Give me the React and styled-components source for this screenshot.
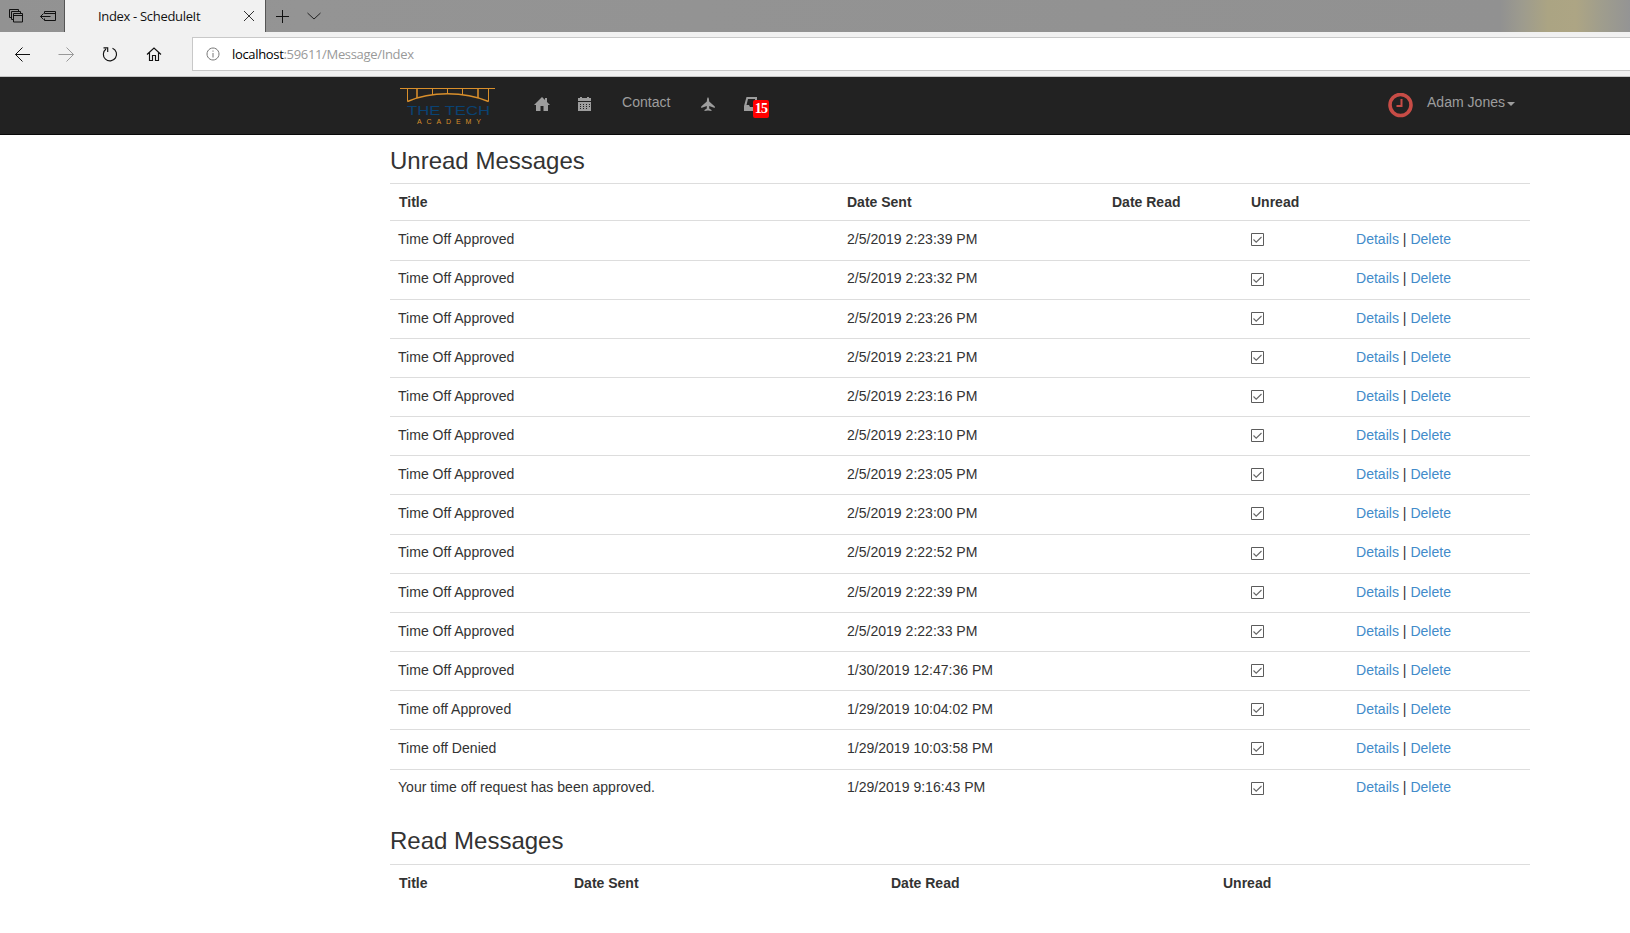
import React from 'react';
import styled, { createGlobalStyle } from 'styled-components';

const Global = createGlobalStyle`
  * { box-sizing: border-box; }
  body { margin: 0; background: #fff; color: #333; overflow: hidden;
    font: 14.06px/20px "Liberation Sans", Arial, sans-serif; }
`;
const Page = styled.div`height: 933px; overflow: hidden;`;
const TabStrip = styled.div`
  display: flex; height: 32px;
  background: linear-gradient(90deg, #929292 0, #949494 300px, #919191 1500px, #9d9b8e 1522px, #aba483 1548px, #ada584 1576px, #9f9d8d 1602px, #949494 1630px);
`;
const TabActions = styled.div`
  width: 65px; display: flex; align-items: center; padding-left: 8px; gap: 16px; border-right: 1px solid #555;
`;
const Tab = styled.div`
  width: 201px; display: flex; align-items: center; justify-content: space-between; padding: 0 10px 0 33px;
  background: #f1f1f1; border-right: 1px solid #555; color: #111;
  font: 13px "Open Sans", "Noto Sans", sans-serif; white-space: nowrap;
`;
const TabTitle = styled.span`letter-spacing: ${p => p.$ls || '-0.25px'};`;
const NewTab = styled.div`display: flex; align-items: center; padding-left: 9px; gap: 18px;`;
const AddressBar = styled.div`
  height: 45px; background: #f1f1f1; border-bottom: 1px solid #c5c5c5;
  display: flex; padding-top: 5px;
`;
const NavButtons = styled.div`width: 192px; height: 34px; display: flex; align-items: center; padding-left: 14px; gap: 28px;`;
const UrlField = styled.div`
  flex: 1; height: 34px; background: #fff; border: 1px solid #c8c8c8; border-right: 0;
  display: flex; align-items: center; padding-left: 13px; gap: 12px; color: #999;
  font: 13px "Open Sans", "Noto Sans", sans-serif; b { font-weight: 400; color: #000; }
`;
const Navbar = styled.nav`
  height: 58px; background: #222; border-bottom: 1px solid #080808; display: flex; padding-left: 400px; color: #9d9d9d;
`;
const Brand = styled.div`width: 134px; padding-top: 10px; svg { display: block; }`;
const NavItem = styled.div`width: ${p => p.$w}px; padding-top: ${p => p.$top || 0}px; svg { display: block; }`;
const Inbox = styled(NavItem)`position: relative;`;
const Badge = styled.span`
  position: absolute; left: 9px; top: 23px; width: 16px; height: 18px; border-radius: 2px; background: #f00; color: #fff;
  font: bold 14px/18px "Liberation Serif", serif; letter-spacing: -0.7px; text-align: center;
`;
const User = styled.div`margin-left: auto; width: 242px; display: flex;`;
const UserName = styled.div`padding: 15px 0 0 14px; display: flex; height: 35px; align-items: center;`;
const Caret = styled.span`border: 4px solid transparent; border-top-color: #9d9d9d; border-bottom: 0; margin: 3px 0 0 2px;`;
const Section = styled.section`width: 1140px; margin-left: 390px; padding-top: ${p => p.$top}px;`;
const Heading = styled.h2`margin: 0; height: ${p => p.$h}px; font-size: 24px; line-height: 28px; font-weight: 400;`;
const Row = styled.div`
  display: grid; grid-template-columns: ${p => p.$cols}; height: 39.16px;
  border-top: 1px solid #ddd; padding-top: 7.85px;
`;
const HeadRow = styled(Row)`height: 37.4px; padding-top: 8px; font-weight: 700; font-size: 14px;`;
const Cell = styled.div`padding-left: 8px; white-space: nowrap;`;
const HeadCell = styled.div`padding-left: 8px; white-space: nowrap; &:first-child { padding-left: 9px; }`;
const Check = styled.div`padding: 4.15px 0 0 8px; svg { display: block; }`;
const Link = styled.a`color: #428bca;`;

const unreadCols = '449px 265px 139px 105px 1fr';
const readCols = '176px 317px 332px 1fr';

const approved = ['2/5/2019 2:23:39 PM', '2/5/2019 2:23:32 PM', '2/5/2019 2:23:26 PM', '2/5/2019 2:23:21 PM',
  '2/5/2019 2:23:16 PM', '2/5/2019 2:23:10 PM', '2/5/2019 2:23:05 PM', '2/5/2019 2:23:00 PM', '2/5/2019 2:22:52 PM',
  '2/5/2019 2:22:39 PM', '2/5/2019 2:22:33 PM', '1/30/2019 12:47:36 PM'];
const messages = [
  ...approved.map(d => ['Time Off Approved', d]),
  ['Time off Approved', '1/29/2019 10:04:02 PM'],
  ['Time off Denied', '1/29/2019 10:03:58 PM'],
  ['Your time off request has been approved.', '1/29/2019 9:16:43 PM'],
];

const Line = ({ w = 16, h = 16, d, color = '#111', sw = 1 }) => (
  <svg width={w} height={h} viewBox={`0 0 ${w} ${h}`} fill="none" stroke={color} strokeWidth={sw}><path d={d} /></svg>
);
const Solid = ({ d, w = 16, h = 16 }) => (
  <svg width={w} height={h} viewBox={`0 0 ${w} ${h}`} fill="#9d9d9d"><path fillRule="evenodd" d={d} /></svg>
);
const Checkbox = () => (
  <svg width="13" height="13" fill="none">
    <path d="M.5.5h12v12H.5z" stroke="#5c5c5c" />
    <path d="M2.500 6.500l2.700 2.700 5.300-5.200" stroke="#666" strokeWidth="1.1" />
  </svg>
);
const Clock = () => (
  <svg width="25" height="25" fill="none" stroke="#c74c46">
    <circle cx="12.500" cy="12" r="10.500" strokeWidth="3.600" />
    <path d="M13.500 6v7h-5" strokeWidth="2" />
  </svg>
);

const Logo = () => (
  <svg width="96" height="40" viewBox="0 0 96 40" fill="none">
    <path d="M0 1.5H95M7.5 2V14.5M88.5 2V14.5M32.5 2V8M47.5 2V6.5M62.5 2V8" stroke="#d98f2b" />
    <path d="M17 2V11M78 2V11" stroke="#c07f2a" strokeWidth="1.8" />
    <path d="M7.5 14.5Q25 6.800 47.5 6.800T88.5 14.5" stroke="#d98f2b" strokeWidth="1.5" />
    <text x="7" y="28" fill="#0a4272" fontFamily="Liberation Sans" fontSize="12" textLength="83" lengthAdjust="spacingAndGlyphs">THE TECH</text>
    <text x="17" y="37" fill="#d98f2b" fontFamily="Liberation Sans" fontSize="7" textLength="64">ACADEMY</text>
  </svg>
);

export default function App() {
  return (
    <Page>
      <Global />
      <TabStrip>
        <TabActions>
          <Line d="M5.500 5.500h9v8.500h-9zM5.500 7.500h9M5 11.500H3.500v-8h9v2M3 9.500H1.500v-8h9v2" />
          <Line w={17} d="M4.500 5.500v-2h11v9h-11v-2M4.500 5.500h11M.5 8.500h10M3.500 5.500l-3 3 3 3" />
        </TabActions>
        <Tab>
          <TabTitle $ls="-0.32px">Index - ScheduleIt</TabTitle>
          <Line w={12} h={12} d="M1 1l10 10M11 1L1 11" color="#333" />
        </Tab>
        <NewTab>
          <Line w={14} h={14} d="M7.5 1v13M1 7.5h13" />
          <Line w={14} h={14} d="M.5 4l6.500 6 6.500-6" color="#222" />
        </NewTab>
      </TabStrip>
      <AddressBar>
        <NavButtons>
          <Line d="M1.500 8.500H16M8.500 1.500l-7 7 7 7" />
          <Line d="M0.500 8.500h15M8.500 1.500l7 7-7 7" color="#999" />
          <Line d="M10.500 2.200A6.600 6.600 0 1 1 4 3M1.500 1.800h4.200v4.200" sw={1.15} />
          <Line d="M1 8.500l7-6.500 7 6.500M3.500 6.500v8h3v-5h3v5h3v-8" sw={1.15} />
        </NavButtons>
        <UrlField>
          <Line w={14} h={14} d="M7 1a6 6 0 1 0 .01 0M7 6v4.500M7 3.500v1.200" color="#777" />
          <TabTitle $ls="-0.33px"><b>localhost</b>:59611/Message/Index</TabTitle>
        </UrlField>
      </AddressBar>
      <Navbar>
        <Brand><Logo /></Brand>
        <NavItem $w={43} $top={20}><Solid d="M8 0l8 8h-2v6H9.500v-5h-3v5H2V8H0zM11 1h2v4l-2-2z" /></NavItem>
        <NavItem $w={45} $top={20}><Solid d="M1 1h2V0h2v1h5V0h2v1h2v3H1zM1 5h13v9H1zM3 7v1h1V7zm3 0v1h1V7zm3 0v1h1V7zM12 7v1h1V7zM3 9v1h1V9zm3 0v1h1V9zm3 0v1h1V9zM12 9v1h1V9zM3 11v1h1v-1zm3 0v1h1v-1zm3 0v1h1v-1z" /></NavItem>
        <NavItem $w={79} $top={15}>Contact</NavItem>
        <NavItem $w={43} $top={20}><Solid w={14} d="M7 0Q8.200 1 8.200 4.500L13.800 9.500V11L8.200 9v2.500L10.500 13v1L7 13.400 3.500 14v-1l2.300-1.500V9L.2 11V9.500L5.800 4.500Q5.800 1 7 0z" /></NavItem>
        <Inbox $w={40} $top={20}><Solid d="M2.500 0H13v14H0V9zM4 2L2.500 8H5l1 2h5V2z" /><Badge>15</Badge></Inbox>
        <User>
          <NavItem $w={25} $top={16}><Clock /></NavItem>
          <UserName>Adam Jones<Caret /></UserName>
        </User>
      </Navbar>
      <Section $top={12}>
        <Heading $h={36}>Unread Messages</Heading>
        <HeadRow $cols={unreadCols}>
          {['Title', 'Date Sent', 'Date Read', 'Unread'].map(t => <HeadCell key={t}>{t}</HeadCell>)}
        </HeadRow>
        {messages.map(([title, date]) => (
          <Row key={date} $cols={unreadCols}>
            <Cell>{title}</Cell><Cell>{date}</Cell><Cell />
            <Check><Checkbox /></Check>
            <Cell><Link>Details</Link> | <Link>Delete</Link></Cell>
          </Row>
        ))}
      </Section>
      <Section $top={19.2}>
        <Heading $h={37}>Read Messages</Heading>
        <HeadRow $cols={readCols}>
          {['Title', 'Date Sent', 'Date Read', 'Unread'].map(t => <HeadCell key={t}>{t}</HeadCell>)}
        </HeadRow>
      </Section>
    </Page>
  );
}
